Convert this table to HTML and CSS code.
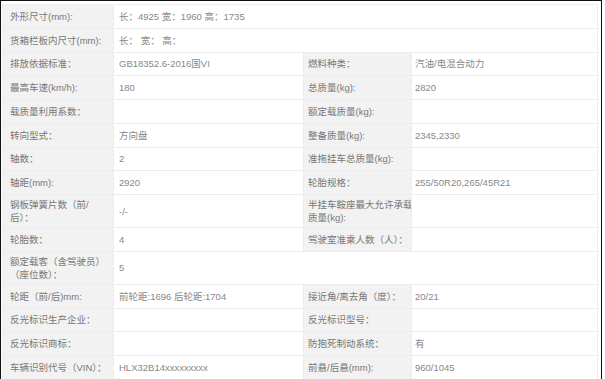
FILE: index.html
```html
<!DOCTYPE html>
<html lang="zh-CN">
<head>
<meta charset="utf-8">
<title>车辆参数</title>
<link rel="stylesheet" href="styles.css">
</head>
<body>
<div class="sheet">
<table class="spec">
<colgroup><col class="c-k1"><col class="c-v1"><col class="c-k2"><col class="c-v2"></colgroup>
<tr><td class="k k1">外形尺寸(mm):</td><td class="v v1" colspan="3">长：4925 宽：1960 高：1735</td></tr>
<tr><td class="k k1">货箱栏板内尺寸(mm):</td><td class="v v1" colspan="3">长： 宽： 高：</td></tr>
<tr><td class="k k1">排放依据标准：</td><td class="v v1">GB18352.6-2016国VI</td><td class="k k2">燃料种类：</td><td class="v v2">汽油/电混合动力</td></tr>
<tr><td class="k k1">最高车速(km/h):</td><td class="v v1">180</td><td class="k k2">总质量(kg):</td><td class="v v2">2820</td></tr>
<tr><td class="k k1">载质量利用系数：</td><td class="v v1"></td><td class="k k2">额定载质量(kg):</td><td class="v v2"></td></tr>
<tr><td class="k k1">转向型式：</td><td class="v v1">方向盘</td><td class="k k2">整备质量(kg):</td><td class="v v2">2345,2330</td></tr>
<tr><td class="k k1">轴数：</td><td class="v v1">2</td><td class="k k2">准拖挂车总质量(kg):</td><td class="v v2"></td></tr>
<tr><td class="k k1">轴距(mm):</td><td class="v v1">2920</td><td class="k k2">轮胎规格：</td><td class="v v2">255/50R20,265/45R21</td></tr>
<tr><td class="k k1">钢板弹簧片数（前/<br>后）：</td><td class="v v1">-/-</td><td class="k k2">半挂车鞍座最大允许承载<br>质量(kg):</td><td class="v v2"></td></tr>
<tr><td class="k k1">轮胎数：</td><td class="v v1">4</td><td class="k k2">驾驶室准乘人数（人）：</td><td class="v v2"></td></tr>
<tr><td class="k k1">额定载客（含驾驶员）<br>（座位数）：</td><td class="v v1" colspan="3">5</td></tr>
<tr><td class="k k1">轮距（前/后)mm:</td><td class="v v1">前轮距:1696 后轮距:1704</td><td class="k k2">接近角/离去角（度）：</td><td class="v v2">20/21</td></tr>
<tr><td class="k k1">反光标识生产企业：</td><td class="v v1"></td><td class="k k2">反光标识型号：</td><td class="v v2"></td></tr>
<tr><td class="k k1">反光标识商标：</td><td class="v v1"></td><td class="k k2">防抱死制动系统：</td><td class="v v2">有</td></tr>
<tr><td class="k k1">车辆识别代号（VIN）：</td><td class="v v1">HLX32B14xxxxxxxxx</td><td class="k k2">前悬/后悬(mm):</td><td class="v v2">960/1045</td></tr>
</table>
</div>
</body>
</html>
```
FILE: styles.css
```css
html, body {
  margin: 0;
  padding: 0;
  background: #fff;
  overflow: hidden;
}
body {
  width: 605px;
  height: 379px;
  font-family: "Liberation Sans", "Noto Sans CJK SC", sans-serif;
  font-size: 9.5px;
}
.sheet {
  width: 595px;
  border: 1px solid #111;
  border-bottom: none;
  padding: 3px 4px 0 1px;
}
.spec {
  width: 595px;
  table-layout: fixed;
  border-collapse: collapse;
}
.c-k1 { width: 111px; }
.c-v1 { width: 190px; }
.c-k2 { width: 108px; }
.c-v2 { width: 186px; }
.spec td {
  border: 1px solid #ededed;
  height: 16.75px;
  padding: 3px 2px 3px 5px;
  line-height: 13px;
  vertical-align: middle;
  white-space: nowrap;
  overflow: hidden;
}
.spec .k {
  background: #f2f2f2;
  color: #777;
}
.spec .k1 { padding-left: 7px; }
.spec .k2 { padding-left: 4px; padding-right: 0; }
.spec .v { color: #888; }
.spec .v2 { padding-left: 3px; }
```
